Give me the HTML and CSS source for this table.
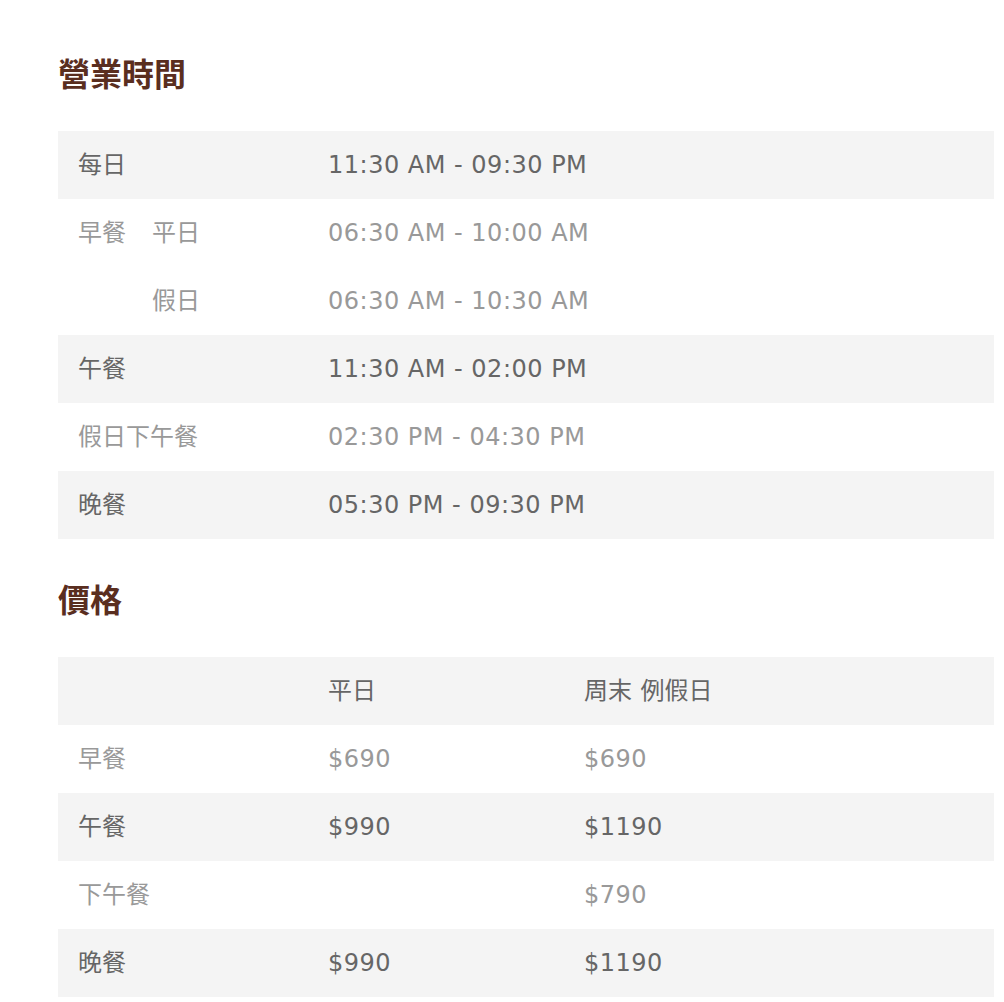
FILE: index.html
```html
<!DOCTYPE html>
<html lang="zh-Hant">
<head>
<meta charset="utf-8">
<title>營業時間</title>
<link rel="stylesheet" href="styles.css">
</head>
<body>
<main class="page">
  <section class="block">
    <h2 class="title">營業時間</h2>
    <div class="table hours">
      <div class="row dark"><div class="cell label"><span>每日</span></div><div class="cell">11:30 AM - 09:30 PM</div></div>
      <div class="row light"><div class="cell label"><span class="main">早餐</span><span class="sub">平日</span></div><div class="cell">06:30 AM - 10:00 AM</div></div>
      <div class="row light"><div class="cell label"><span class="main"></span><span class="sub">假日</span></div><div class="cell">06:30 AM - 10:30 AM</div></div>
      <div class="row dark"><div class="cell label"><span>午餐</span></div><div class="cell">11:30 AM - 02:00 PM</div></div>
      <div class="row light"><div class="cell label"><span>假日下午餐</span></div><div class="cell">02:30 PM - 04:30 PM</div></div>
      <div class="row dark"><div class="cell label"><span>晚餐</span></div><div class="cell">05:30 PM - 09:30 PM</div></div>
    </div>
  </section>
  <section class="block">
    <h2 class="title">價格</h2>
    <div class="table prices">
      <div class="row dark"><div class="cell label"></div><div class="cell cjk">平日</div><div class="cell cjk">周末 例假日</div></div>
      <div class="row light"><div class="cell label">早餐</div><div class="cell">$690</div><div class="cell">$690</div></div>
      <div class="row dark"><div class="cell label">午餐</div><div class="cell">$990</div><div class="cell">$1190</div></div>
      <div class="row light"><div class="cell label">下午餐</div><div class="cell"></div><div class="cell">$790</div></div>
      <div class="row dark"><div class="cell label">晚餐</div><div class="cell">$990</div><div class="cell">$1190</div></div>
    </div>
  </section>
</main>
</body>
</html>
```

FILE: styles.css
```css
html, body {
  margin: 0;
  padding: 0;
  background: #fff;
}
body {
  font-family: "DejaVu Sans", "Noto Sans CJK TC", sans-serif;
}
.page {
  padding: 48px 10px 0 58px;
}
.block + .block {
  margin-top: 35px;
}
.title {
  margin: 0 0 35px;
  font-family: "Noto Sans CJK TC", sans-serif;
  font-size: 32px;
  line-height: 48px;
  font-weight: 700;
  color: #5a2e1f;
}
.table {
  display: flex;
  flex-direction: column;
}
.row {
  display: grid;
  height: 68px;
  align-items: center;
  font-size: 24px;
  letter-spacing: 0.5px;
}
.hours .row {
  grid-template-columns: 270px 1fr;
}
.prices .row {
  grid-template-columns: 270px 256px 1fr;
}
.row.dark {
  background: #f4f4f4;
  color: #666;
}
.row.light {
  background: #fff;
  color: #999;
}
.cell {
  white-space: nowrap;
}
.label,
.cjk {
  font-family: "Noto Sans CJK TC", sans-serif;
  letter-spacing: 0;
  word-spacing: 3px;
  margin-top: -5px;
}
.label {
  padding-left: 20px;
  display: flex;
}
.label .main {
  width: 74px;
}
```
